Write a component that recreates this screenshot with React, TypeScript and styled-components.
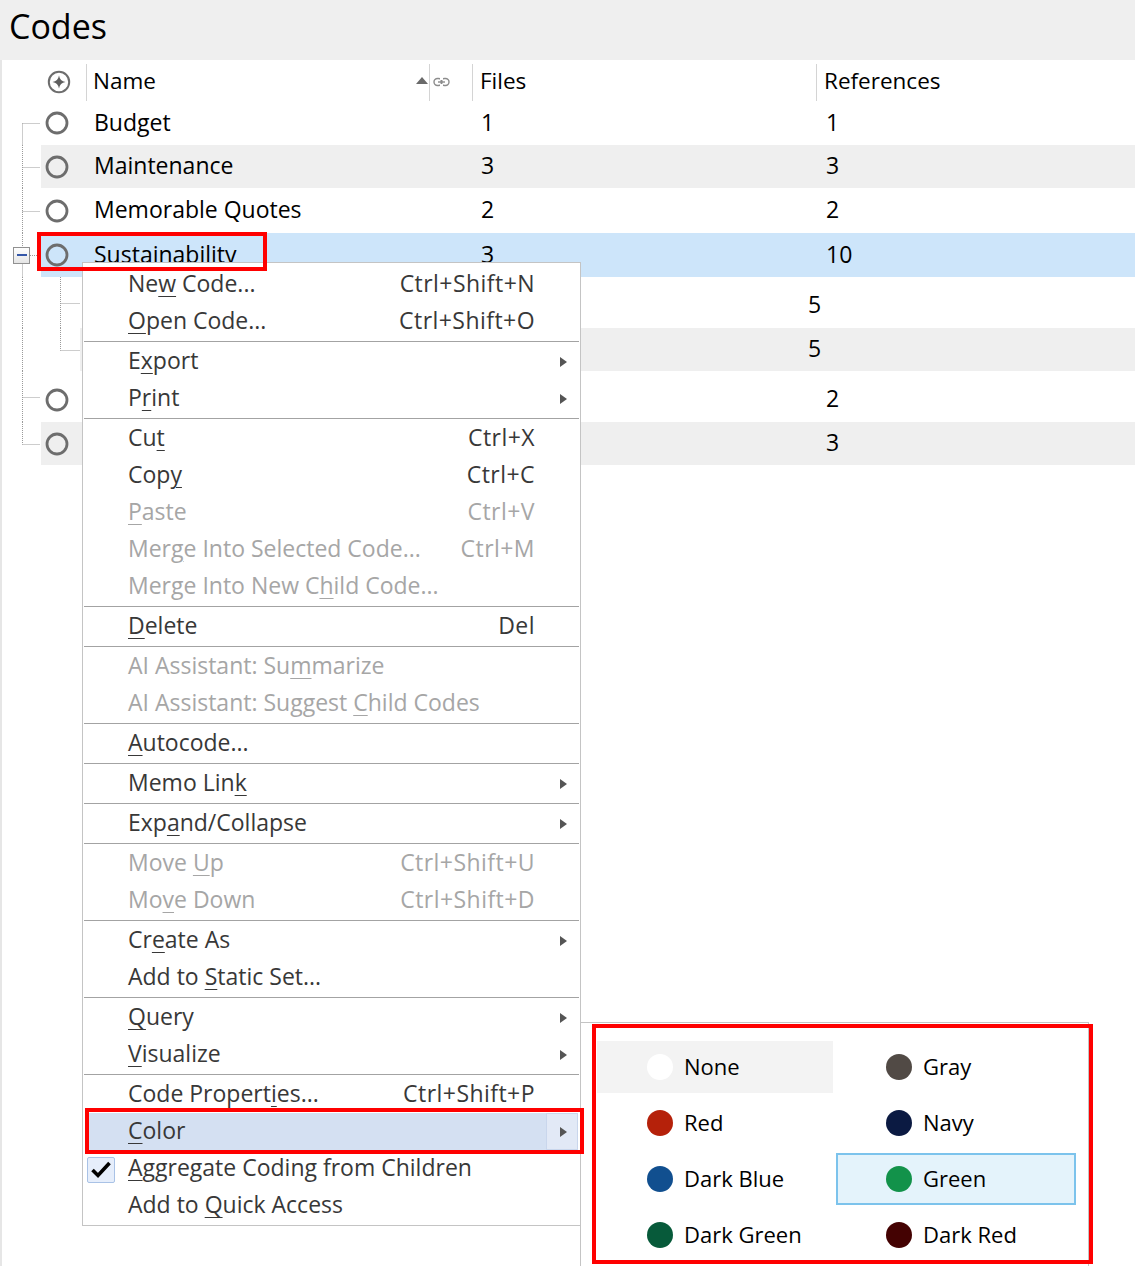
import React from "react";
import styled, { createGlobalStyle } from "styled-components";

const GlobalStyle = createGlobalStyle`
  html, body { margin: 0; padding: 0; background: #fff; }
  body { font-family: "Open Sans", "Noto Sans", sans-serif; -webkit-font-smoothing: antialiased; }
  * { box-sizing: border-box; }
`;

const FONT = `"Open Sans", "Noto Sans", sans-serif`;

const Page = styled.div`
  position: relative;
  width: 1135px;
  height: 1266px;
  overflow: hidden;
  background: #fff;
  font-family: ${FONT};
`;

const TitleBar = styled.div`
  height: 60px;
  background: #efefef;
  padding: 9px 0 0 9px;
  font-size: 34px;
  line-height: 34px;
  color: #000;
`;

const TreePanel = styled.div`
  border-left: 2px solid #e6e6e6;
  padding-top: 4px;
  height: 1206px;
`;

/* ---------- header ---------- */
const HeaderRow = styled.div`
  display: flex;
  height: 37px;
  font-size: 22.5px;
  color: #000;
`;

const HeadGutter = styled.div`
  width: 39px;
  flex: none;
`;

const HeadCell = styled.div<{ $w?: number; $pad?: number; $divider?: boolean }>`
  ${(p) => (p.$w ? `width: ${p.$w}px; flex: none;` : "flex: 1;")}
  display: flex;
  align-items: center;
  padding-left: ${(p) => p.$pad ?? 0}px;
  padding-bottom: 2px;
  border-left: ${(p) => (p.$divider ? "1px solid #d4d4d4" : "none")};
`;

const HeadLabel = styled.span`
  flex: 1;
  margin-top: -3px;
`;

const HeadText = styled.span`
  margin-top: -3px;
`;

const SortArrow = styled.span`
  width: 0;
  height: 0;
  border-left: 6px solid transparent;
  border-right: 6px solid transparent;
  border-bottom: 7px solid #6a6a6a;
  margin-right: 1px;
  margin-top: -2px;
`;

/* ---------- rows ---------- */
const Row = styled.div<{ $h: number }>`
  display: flex;
  height: ${(p) => p.$h}px;
  font-size: 23px;
  color: #000;
`;

const Gutter = styled.div<{ $w: number }>`
  width: ${(p) => p.$w}px;
  flex: none;
  display: flex;
`;

const RowBody = styled.div<{ $tone: "plain" | "alt" | "selected"; $drop: number }>`
  flex: 1;
  display: flex;
  align-items: center;
  padding-top: ${(p) => p.$drop}px;
  background: ${(p) =>
    p.$tone === "selected" ? "#cde5fa" : p.$tone === "alt" ? "#efefef" : "#fff"};
`;

const IconCell = styled.div`
  width: 32px;
  flex: none;
  display: flex;
  justify-content: center;
  align-items: center;
`;

const Cell = styled.div<{ $w?: number; $pad: number }>`
  ${(p) => (p.$w ? `width: ${p.$w}px; flex: none;` : "flex: 1;")}
  padding-left: ${(p) => p.$pad}px;
  margin-top: -3px;
  white-space: nowrap;
`;

/* ---------- context menu ---------- */
const Menu = styled.div`
  position: absolute;
  left: 82px;
  top: 262px;
  width: 499px;
  border: 1px solid #c4c4c4;
  background: #fff;
  padding: 3px 0 1px;
  z-index: 2;
  font-size: 23px;
`;

const Item = styled.div<{ $disabled?: boolean; $active?: boolean }>`
  height: 37px;
  margin: 0 2px;
  display: grid;
  grid-template-columns: 43px 1fr auto 43px;
  align-items: center;
  white-space: nowrap;
  color: ${(p) => (p.$disabled ? "#a6a6a6" : "#383838")};
  background: ${(p) => (p.$active ? "#d4e0f2" : "transparent")};
`;

const Label = styled.span`
  margin-top: -4px;
`;

const CheckCell = styled.div`
  display: flex;
  align-items: center;
  height: 100%;
`;

const CheckBox = styled.div`
  margin-left: 2px;
  margin-top: 2px;
  width: 28px;
  height: 26px;
  border: 1px solid #a9c2e6;
  border-radius: 2px;
  background: #e6eefb;
  display: flex;
  align-items: center;
  justify-content: center;
`;

const Shortcut = styled.span`
  margin-top: -4px;
  letter-spacing: 0.45px;
`;

const ArrowCell = styled.div<{ $active?: boolean }>`
  height: 100%;
  margin-left: 11px;
  padding-left: 13px;
  display: flex;
  align-items: center;
  background: ${(p) => (p.$active ? "#e2e9f6" : "transparent")};
  border: ${(p) => (p.$active ? "1px solid #c9d6ec" : "1px solid transparent")};
`;

const Arrow = styled.span`
  width: 0;
  height: 0;
  border-top: 5.5px solid transparent;
  border-bottom: 5.5px solid transparent;
  border-left: 7px solid #555;
`;

const Separator = styled.div`
  height: 1px;
  margin: 1px 1px;
  background: #a3a3a3;
`;

const Mn = styled.span`
  text-decoration: underline;
  text-decoration-thickness: 1px;
  text-underline-offset: 4px;
`;

/* ---------- color submenu ---------- */
const ColorMenu = styled.div`
  position: absolute;
  left: 580px;
  top: 1022px;
  width: 509px;
  height: 270px;
  border: 1px solid #c4c4c4;
  background: #fff;
  padding: 18px 0 0 16px;
  display: grid;
  grid-template-columns: 236px 240px;
  grid-auto-rows: 52px;
  row-gap: 4px;
  column-gap: 3px;
  align-content: start;
  z-index: 2;
  font-size: 22px;
  color: #000;
`;

const ColorCell = styled.div<{ $state?: "hover" | "selected" }>`
  display: flex;
  align-items: center;
  gap: 11px;
  padding-left: ${(p) => (p.$state === "selected" ? 48 : 50)}px;
  background: ${(p) =>
    p.$state === "hover" ? "#f3f3f3" : p.$state === "selected" ? "#e4f3fb" : "transparent"};
  border: ${(p) => (p.$state === "selected" ? "2px solid #7cc3ec" : "none")};
`;

const ColorName = styled.span`
  margin-top: -2px;
`;

const Swatch = styled.span<{ $c: string }>`
  width: 26px;
  height: 26px;
  border-radius: 50%;
  background: ${(p) => p.$c};
  flex: none;
`;

/* ---------- annotations ---------- */
const Mark = styled.div<{ $x: number; $y: number; $w: number; $h: number }>`
  position: absolute;
  left: ${(p) => p.$x}px;
  top: ${(p) => p.$y}px;
  width: ${(p) => p.$w}px;
  height: ${(p) => p.$h}px;
  border: 4px solid #ff0000;
  z-index: 5;
  pointer-events: none;
`;

/* ---------- icons ---------- */
const NodeIcon = () => (
  <svg width="24" height="24" viewBox="0 0 24 24">
    <circle cx="12" cy="12" r="10" fill="none" stroke="#6d6d6d" strokeWidth="2.8" />
  </svg>
);

const AllIcon = () => (
  <svg width="24" height="24" viewBox="0 0 24 24">
    <circle cx="12" cy="12" r="10.2" fill="none" stroke="#6d6d6d" strokeWidth="2" />
    <path d="M12 5.5 Q12.9 11.1 18.5 12 Q12.9 12.9 12 18.5 Q11.1 12.9 5.5 12 Q11.1 11.1 12 5.5Z" fill="#5f5f5f" />
  </svg>
);

const LinkIcon = () => (
  <svg width="17" height="10" viewBox="0 0 17 10">
    <rect x="1" y="1.5" width="8" height="7" rx="3.5" fill="none" stroke="#8c8c8c" strokeWidth="1.4" />
    <rect x="8" y="1.5" width="8" height="7" rx="3.5" fill="none" stroke="#8c8c8c" strokeWidth="1.4" />
    <rect x="7" y="0" width="3" height="3" fill="#fff" />
    <rect x="7" y="7" width="3" height="3" fill="#fff" />
    <line x1="5" y1="5" x2="12" y2="5" stroke="#8c8c8c" strokeWidth="1.4" />
  </svg>
);

const CheckGlyph = () => (
  <svg width="22" height="20" viewBox="0 0 22 20">
    <path d="M2.5 10 L8 15.5 L19.5 3" fill="none" stroke="#000" strokeWidth="3.6" />
  </svg>
);

type Tree = {
  main: "first" | "mid" | "last";
  expander?: boolean;
  child?: "mid" | "last";
};

const Connector = ({ w, h, t }: { w: number; h: number; t: Tree }) => {
  const c = Math.round(h / 2) + 0.5;
  const mx = 20.5;
  const dot = { stroke: "#9a9a9a", strokeWidth: 1, strokeDasharray: "1 1" };
  const parts: React.ReactNode[] = [];
  if (t.child) {
    parts.push(<line key="m" x1={mx} y1={0} x2={mx} y2={h} {...dot} />);
    parts.push(<line key="cv" x1={58.5} y1={0} x2={58.5} y2={t.child === "last" ? c : h} {...dot} />);
    parts.push(<line key="ch" x1={58.5} y1={c} x2={w} y2={c} {...dot} />);
  } else {
    const top = t.main === "first" ? c : 0;
    const bottom = t.main === "last" ? c : h;
    if (t.expander) {
      parts.push(<line key="a" x1={mx} y1={top} x2={mx} y2={c - 8} {...dot} />);
      parts.push(<line key="b" x1={mx} y1={c + 8} x2={mx} y2={bottom} {...dot} />);
      parts.push(<line key="h" x1={28} y1={c} x2={38} y2={c} {...dot} />);
      parts.push(
        <g key="box">
          <defs>
            <linearGradient id="exp" x1="0" y1="0" x2="0" y2="1">
              <stop offset="0" stopColor="#ffffff" />
              <stop offset="1" stopColor="#e4e4e4" />
            </linearGradient>
          </defs>
          <rect x={11.5} y={c - 8} width={16} height={16} fill="url(#exp)" stroke="#919191" />
          <rect x={15} y={c - 1.5} width={10} height={2} fill="#3557a8" />
        </g>
      );
    } else {
      parts.push(<line key="v" x1={mx} y1={top} x2={mx} y2={bottom} {...dot} />);
      parts.push(<line key="h" x1={mx} y1={c} x2={38} y2={c} {...dot} />);
    }
  }
  return (
    <svg width={w} height={h} viewBox={`0 0 ${w} ${h}`}>
      {parts}
    </svg>
  );
};

type RowData = {
  name: string;
  files: string;
  refs: string;
  h: number;
  drop?: number;
  tone: "plain" | "alt" | "selected";
  tree: Tree;
};

const rows: RowData[] = [
  { name: "Budget", files: "1", refs: "1", h: 44, tone: "plain", tree: { main: "first" } },
  { name: "Maintenance", files: "3", refs: "3", h: 43, tone: "alt", tree: { main: "mid" } },
  { name: "Memorable Quotes", files: "2", refs: "2", h: 45, tone: "plain", tree: { main: "mid" } },
  { name: "Sustainability", files: "3", refs: "10", h: 44, tone: "selected", tree: { main: "mid", expander: true } },
  { name: "", files: "", refs: "5", h: 51, drop: 6, tone: "plain", tree: { main: "mid", child: "mid" } },
  { name: "", files: "", refs: "5", h: 43, tone: "alt", tree: { main: "mid", child: "last" } },
  { name: "", files: "", refs: "2", h: 51, drop: 6, tone: "plain", tree: { main: "mid" } },
  { name: "", files: "", refs: "3", h: 43, tone: "alt", tree: { main: "last" } },
];

type MenuEntry =
  | "sep"
  | {
      label: React.ReactNode;
      shortcut?: string;
      sub?: boolean;
      disabled?: boolean;
      active?: boolean;
      checked?: boolean;
    };

const menu: MenuEntry[] = [
  { label: <>Ne<Mn>w</Mn> Code...</>, shortcut: "Ctrl+Shift+N" },
  { label: <><Mn>O</Mn>pen Code...</>, shortcut: "Ctrl+Shift+O" },
  "sep",
  { label: <>E<Mn>x</Mn>port</>, sub: true },
  { label: <>P<Mn>r</Mn>int</>, sub: true },
  "sep",
  { label: <>Cu<Mn>t</Mn></>, shortcut: "Ctrl+X" },
  { label: <>Cop<Mn>y</Mn></>, shortcut: "Ctrl+C" },
  { label: <><Mn>P</Mn>aste</>, shortcut: "Ctrl+V", disabled: true },
  { label: <>Mer<Mn>g</Mn>e Into Selected Code...</>, shortcut: "Ctrl+M", disabled: true },
  { label: <>Merge Into New C<Mn>h</Mn>ild Code...</>, disabled: true },
  "sep",
  { label: <><Mn>D</Mn>elete</>, shortcut: "Del" },
  "sep",
  { label: <>AI Assistant: Su<Mn>m</Mn>marize</>, disabled: true },
  { label: <>AI Assistant: Suggest <Mn>C</Mn>hild Codes</>, disabled: true },
  "sep",
  { label: <><Mn>A</Mn>utocode...</> },
  "sep",
  { label: <>Memo Lin<Mn>k</Mn></>, sub: true },
  "sep",
  { label: <>Exp<Mn>a</Mn>nd/Collapse</>, sub: true },
  "sep",
  { label: <>Move <Mn>U</Mn>p</>, shortcut: "Ctrl+Shift+U", disabled: true },
  { label: <>Mo<Mn>v</Mn>e Down</>, shortcut: "Ctrl+Shift+D", disabled: true },
  "sep",
  { label: <>Cr<Mn>e</Mn>ate As</>, sub: true },
  { label: <>Add to <Mn>S</Mn>tatic Set...</> },
  "sep",
  { label: <><Mn>Q</Mn>uery</>, sub: true },
  { label: <><Mn>V</Mn>isualize</>, sub: true },
  "sep",
  { label: <>Code Propert<Mn>i</Mn>es...</>, shortcut: "Ctrl+Shift+P" },
  { label: <><Mn>C</Mn>olor</>, sub: true, active: true },
  { label: <><Mn>A</Mn>ggregate Coding from Children</>, checked: true },
  { label: <>Add to <Mn>Q</Mn>uick Access</> },
];

const colors: { name: string; c: string; state?: "hover" | "selected" }[] = [
  { name: "None", c: "#ffffff", state: "hover" },
  { name: "Gray", c: "#514a45" },
  { name: "Red", c: "#b5210a" },
  { name: "Navy", c: "#0b1a42" },
  { name: "Dark Blue", c: "#114f8f" },
  { name: "Green", c: "#12924a", state: "selected" },
  { name: "Dark Green", c: "#075a3a" },
  { name: "Dark Red", c: "#440202" },
];

export default function App() {
  return (
    <Page>
      <GlobalStyle />
      <TitleBar>Codes</TitleBar>
      <TreePanel>
        <HeaderRow>
          <HeadGutter />
          <HeadCell $w={45} $pad={6}>
            <AllIcon />
          </HeadCell>
          <HeadCell $w={343} $pad={6} $divider>
            <HeadLabel>Name</HeadLabel>
            <SortArrow />
          </HeadCell>
          <HeadCell $w={43} $pad={3} $divider>
            <LinkIcon />
          </HeadCell>
          <HeadCell $w={344} $pad={7} $divider>
            <HeadText>Files</HeadText>
          </HeadCell>
          <HeadCell $pad={7} $divider>
            <HeadText>References</HeadText>
          </HeadCell>
        </HeaderRow>
        {rows.map((r, i) => {
          const child = !!r.tree.child;
          const gw = child ? 78 : 39;
          return (
            <Row key={i} $h={r.h}>
              <Gutter $w={gw}>
                <Connector w={gw} h={r.h} t={r.tree} />
              </Gutter>
              <RowBody $tone={r.tone} $drop={r.drop ?? 0}>
                <IconCell>
                  <NodeIcon />
                </IconCell>
                <Cell $w={child ? 360 : 399} $pad={21}>
                  {r.name}
                </Cell>
                <Cell $w={child ? 326 : 344} $pad={9}>
                  {r.files}
                </Cell>
                <Cell $pad={10}>{r.refs}</Cell>
              </RowBody>
            </Row>
          );
        })}
      </TreePanel>

      <Menu>
        {menu.map((m, i) =>
          m === "sep" ? (
            <Separator key={i} />
          ) : (
            <Item key={i} $disabled={m.disabled} $active={m.active}>
              <CheckCell>
                {m.checked && (
                  <CheckBox>
                    <CheckGlyph />
                  </CheckBox>
                )}
              </CheckCell>
              <Label>{m.label}</Label>
              <Shortcut>{m.shortcut ?? ""}</Shortcut>
              <ArrowCell $active={m.active}>{m.sub && <Arrow />}</ArrowCell>
            </Item>
          )
        )}
      </Menu>

      <ColorMenu>
        {colors.map((c) => (
          <ColorCell key={c.name} $state={c.state}>
            <Swatch $c={c.c} />
            <ColorName>{c.name}</ColorName>
          </ColorCell>
        ))}
      </ColorMenu>

      <Mark $x={37} $y={232} $w={230} $h={39} />
      <Mark $x={85} $y={1108} $w={499} $h={46} />
      <Mark $x={592} $y={1024} $w={501} $h={240} />
    </Page>
  );
}
